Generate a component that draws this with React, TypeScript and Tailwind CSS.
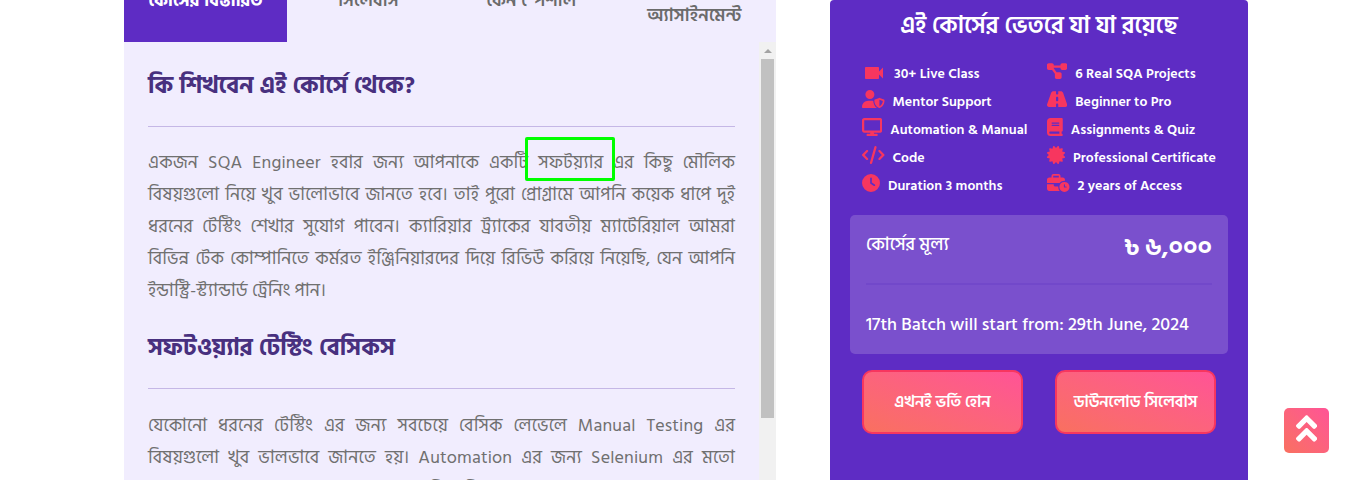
import type { ComponentType, ReactNode } from "react";
import {
  FaUserShield, FaDisplay, FaCode, FaClock, FaDiagramProject, FaRoad, FaBook,
  FaCertificate, FaBusinessTime,
} from "react-icons/fa6";
import { FaAngleDoubleUp } from "react-icons/fa";
import { MdVideocam } from "react-icons/md";

type Item = { Icon: ComponentType<{ className?: string }>; label: string; size: string };

const leftItems: Item[] = [
  { Icon: MdVideocam, label: "30+ Live Class", size: "h-6 w-6" },
  { Icon: FaUserShield, label: "Mentor Support", size: "mb-1 h-[18px] w-[22.5px]" },
  { Icon: FaDisplay, label: "Automation & Manual", size: "mb-1 h-[18px] w-[20.25px]" },
  { Icon: FaCode, label: "Code", size: "mb-1 h-[18px] w-[22.5px]" },
  { Icon: FaClock, label: "Duration 3 months", size: "mb-1 h-[18px] w-[18px]" },
];
const rightItems: Item[] = [
  { Icon: FaDiagramProject, label: "6 Real SQA Projects", size: "mb-1 h-[18px] w-[20.25px]" },
  { Icon: FaRoad, label: "Beginner to Pro", size: "mb-1 h-[18px] w-[20.25px]" },
  { Icon: FaBook, label: "Assignments & Quiz", size: "mb-1 h-[18px] w-[15.75px]" },
  { Icon: FaCertificate, label: "Professional Certificate", size: "mb-1 h-[18px] w-[18px]" },
  { Icon: FaBusinessTime, label: "2 years of Access", size: "mb-1 h-[18px] w-[22.5px]" },
];

function Features({ items }: { items: Item[] }) {
  return (
    <ul className="flex flex-col">
      {items.map(({ Icon, label, size }) => (
        <li key={label} className="flex h-7 items-center gap-2 whitespace-nowrap">
          <Icon className={`${size} shrink-0 text-[#f7365f]`} />
          <span className="pt-0.5 text-sm leading-5 font-semibold text-white">{label}</span>
        </li>
      ))}
    </ul>
  );
}

function Line({ children, last = false }: { children: ReactNode; last?: boolean }) {
  return (
    <span className={last ? "block h-8 whitespace-nowrap" : "block h-8 whitespace-nowrap [text-align-last:justify]"}>
      {children}
    </span>
  );
}

export default function App() {
  return (
    <div className="flex h-[480px] w-[1357px] items-start overflow-hidden bg-white pl-[124px] font-['Hind_Siliguri','Noto_Sans_Bengali','Noto_Sans',sans-serif]">
      <main className="h-[480px] w-[652px] shrink-0 overflow-hidden bg-[#f1edfe] tracking-[0.15px]">
        <nav className="flex h-[42px] text-center text-lg leading-6 font-semibold tracking-[0.25px] text-[#6b6b6b]">
          <div className="w-[163px] bg-[#5e2cc4] font-bold tracking-[0.15px] whitespace-nowrap text-white"><span className="-mt-[11px] block">কোর্সের বিস্তারিত</span></div>
          <div className="w-[163px]"><span className="-mt-[11px] block">সিলেবাস</span></div>
          <div className="w-[163px]"><span className="-mt-[11px] block">কেন স্পেশাল</span></div>
          <div className="w-[163px]"><span className="mt-1 block">অ্যাসাইনমেন্ট</span></div>
        </nav>
        <div className="flex h-[438px]">
          <div className="w-[635px] pl-6 pr-6 pt-6 text-[#707070]">
            <h2 className="h-[60px] text-2xl leading-10 font-bold text-[#48307f]">কি শিখবেন এই কোর্সে থেকে?</h2>
            <hr className="border-t border-[#c5b7e6]" />
            <p className="mt-5 h-[160px] text-lg leading-8">
              <Line>একজন SQA Engineer হবার জন্য আপনাকে একটি <span className="relative">সফটয়্যার<i className="absolute -top-[11px] -left-[13px] h-11 w-[90px] rounded-xs border-3 border-[#0f0]" /></span> এর কিছু মৌলিক</Line>
              <Line>বিষয়গুলো নিয়ে খুব ভালোভাবে জানতে হবে। তাই পুরো প্রোগ্রামে আপনি কয়েক ধাপে দুই</Line>
              <Line>ধরনের টেস্টিং শেখার সুযোগ পাবেন। ক্যারিয়ার ট্র্যাকের যাবতীয় ম্যাটেরিয়াল আমরা</Line>
              <Line>বিভিন্ন টেক কোম্পানিতে কর্মরত ইঞ্জিনিয়ারদের দিয়ে রিভিউ করিয়ে নিয়েছি, যেন আপনি</Line>
              <Line last>ইন্ডাস্ট্রি-স্ট্যান্ডার্ড ট্রেনিং পান।</Line>
            </p>
            <h2 className="mt-[21px] h-[60px] text-2xl leading-10 font-bold text-[#48307f]">সফটওয়্যার টেস্টিং বেসিকস</h2>
            <hr className="border-t border-[#c5b7e6]" />
            <p className="mt-[21px] text-lg leading-8">
              <Line>যেকোনো ধরনের টেস্টিং এর জন্য সবচেয়ে বেসিক লেভেলে Manual Testing এর</Line>
              <Line>বিষয়গুলো খুব ভালভাবে জানতে হয়। Automation এর জন্য Selenium এর মতো</Line>
              <Line last>বহুল ব্যবহৃত সফল অনেক অনেক ভাল ও নিয়ে নিন</Line>
            </p>
          </div>
          <div className="flex w-[17px] flex-col items-center bg-[#f1f1f1]">
            <div className="flex h-[17px] items-center">
              <svg viewBox="0 0 8 4" className="h-1 w-2"><path d="M0 4 4 0l4 4z" fill="#a3a3a3" /></svg>
            </div>
            <div className="h-[359px] w-[13px] shrink-0 bg-[#c1c1c1]" />
          </div>
        </div>
      </main>

      <aside className="ml-[54px] h-[480px] w-[418px] shrink-0 rounded-t-sm bg-[#5e2cc4] px-5 text-white">
        <h3 className="h-[59px] pt-1.5 text-center text-2xl leading-10 font-semibold whitespace-nowrap">এই কোর্সের ভেতরে যা যা রয়েছে</h3>
        <div className="flex h-[156px] gap-[20px] pl-3">
          <div className="w-[165px]"><Features items={leftItems} /></div>
          <Features items={rightItems} />
        </div>
        <section className="h-[139px] rounded-[5px] bg-[#7a50cd] px-4 pt-4">
          <div className="flex h-[54px] justify-between border-b-2 border-[#7248ca]">
            <span className="pt-0.5 text-lg leading-6 font-medium">কোর্সের মূল্য</span>
            <span className="pt-px text-2xl leading-8 font-bold">৳ ৬,০০০</span>
          </div>
          <p className="pt-7 text-lg leading-6 font-medium whitespace-nowrap">17th Batch will start from: 29th June, 2024</p>
        </section>
        <div className="mt-4 flex gap-8 pl-3 text-base font-semibold whitespace-nowrap">
          <button className="h-16 w-[161px] rounded-[10px] border-2 border-[#f7365f] bg-linear-to-tr from-[#f9705f] to-[#ff5396]">এখনই ভর্তি হোন</button>
          <button className="h-16 w-[161px] rounded-[10px] border-2 border-[#f7365f] bg-linear-to-tr from-[#f9705f] to-[#ff5396]">ডাউনলোড সিলেবাস</button>
        </div>
      </aside>
      <button className="mt-[408px] ml-9 flex h-[45px] w-[45px] shrink-0 items-center justify-center rounded-[5px] bg-linear-to-tr from-[#f9705f] to-[#ff5396] text-white">
        <FaAngleDoubleUp className="h-[34px] w-[21.25px] -translate-y-[2.5px]" />
      </button>
    </div>
  );
}
